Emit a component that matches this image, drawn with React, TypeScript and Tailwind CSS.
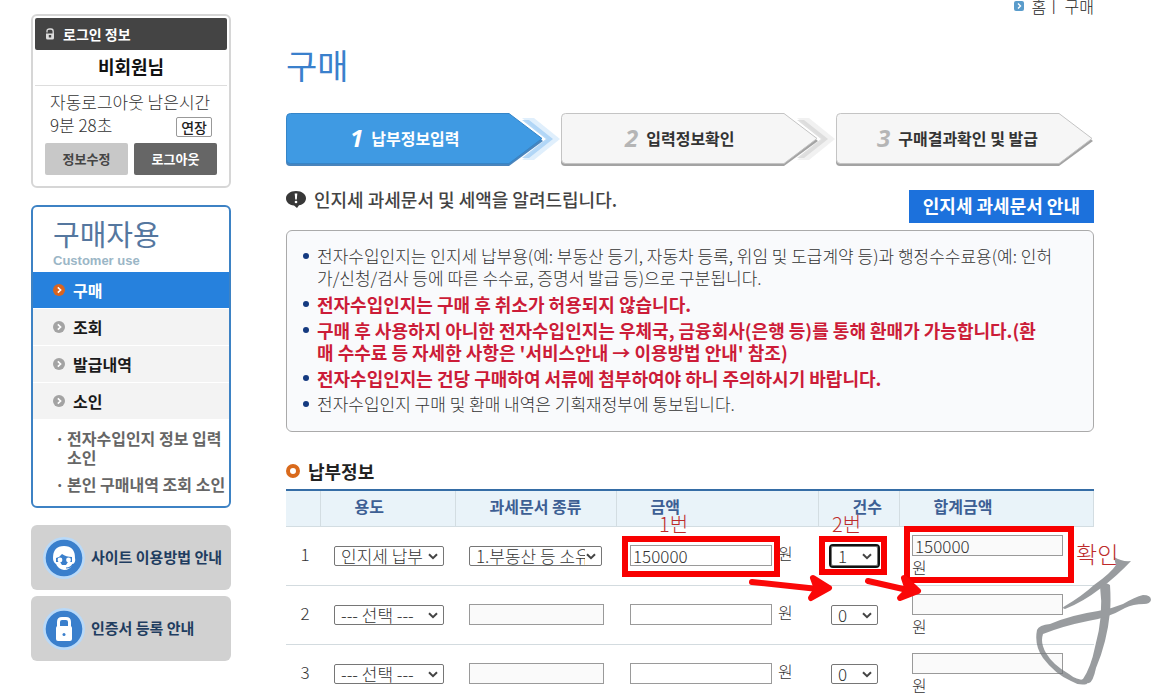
import type { ReactNode } from 'react'

const menu = ['구매', '조회', '발급내역', '소인']

const notices: { text: ReactNode; strong?: boolean }[] = [
  {
    text: (
      <>
        전자수입인지는 인지세 납부용(예: 부동산 등기, 자동차 등록, 위임 및 도급계약 등)과 행정수수료용(예: 인허
        <br />
        가/신청/검사 등에 따른 수수료, 증명서 발급 등)으로 구분됩니다.
      </>
    ),
  },
  { text: '전자수입인지는 구매 후 취소가 허용되지 않습니다.', strong: true },
  {
    text: (
      <>
        구매 후 사용하지 아니한 전자수입인지는 우체국, 금융회사(은행 등)를 통해 환매가 가능합니다.(환
        <br />매 수수료 등 자세한 사항은 '서비스안내 → 이용방법 안내' 참조)
      </>
    ),
    strong: true,
  },
  { text: '전자수입인지는 건당 구매하여 서류에 첨부하여야 하니 주의하시기 바랍니다.', strong: true },
  { text: '전자수입인지 구매 및 환매 내역은 기획재정부에 통보됩니다.' },
]

const rows = [
  { id: 1, use: '인지세 납부', doc: '1.부동산 등 소유권 이전', amount: '150000', count: '1', total: '150000' },
  { id: 2, use: '--- 선택 ---', doc: '', amount: '', count: '0', total: '' },
  { id: 3, use: '--- 선택 ---', doc: '', amount: '', count: '0', total: '' },
]

const inputClass = 'h-[21px] border border-[#9a9a9a] px-0.5 text-[17px] leading-4 text-[#333]'

function Bullet({ active }: { active?: boolean }) {
  return (
    <svg viewBox="0 0 12 12" className="h-3 w-3 shrink-0" aria-hidden="true">
      <circle cx="6" cy="6" r="6" fill={active ? '#d9641e' : '#a3a3a3'} />
      <path d="M4.8 3.4 7.6 6 4.8 8.6" fill="none" stroke="#fff" strokeWidth="1.6" />
    </svg>
  )
}

function LoginBox() {
  return (
    <section className="rounded-md border-2 border-[#d6d6d6] bg-white p-0.5 pb-[11px]">
      <h2 className="flex h-8 items-center gap-2 rounded-xs bg-[#444] px-2.5 text-sm font-bold text-white">
        <svg viewBox="0 0 10 12" className="h-3 w-2.5" aria-hidden="true">
          <path d="M2 4.500V3q0-2 2.500-2H6q2.200 0 2.200 2.500V7" fill="none" stroke="#ddd" strokeWidth="1.300" />
          <path d="M1 5.500h8V10q0 1.500-1.500 1.500h-5Q1 11.500 1 10z" fill="#ddd" />
          <path d="M3.800 7h2.400v2.500H3.800z" fill="#444" />
        </svg>
        로그인 정보
      </h2>
      <p className="h-9 border-b border-[#ddd] text-center text-lg leading-8 font-bold text-[#111]">비회원님</p>
      <div className="px-[15px] pt-[5px] text-[17px] leading-[22px] font-light text-[#333]">
        <p className="whitespace-nowrap">자동로그아웃 남은시간</p>
        <div className="flex items-center justify-between">
          <span>9분 28초</span>
          <button
            type="button"
            className="mt-1 h-5 rounded-xs border border-[#999] bg-white px-1 text-sm leading-4 font-medium text-[#222]"
          >
            연장
          </button>
        </div>
      </div>
      <div className="mt-1.5 flex gap-1.5 px-2.5">
        <button type="button" className="h-8 flex-1 rounded-xs bg-[#c8c8c8] text-[13px] font-bold text-[#444]">
          정보수정
        </button>
        <button type="button" className="h-8 flex-1 rounded-xs bg-[#666] text-[13px] font-bold text-white">
          로그아웃
        </button>
      </div>
    </section>
  )
}

function SideMenu() {
  return (
    <nav className="rounded-md border-2 border-[#3d82c4] bg-white">
      <div className="h-[65px] pt-2.5 pl-5">
        <h2 className="text-[29px] leading-8 text-[#55779f]">구매자용</h2>
        <p className="mt-1 font-['Liberation_Sans',sans-serif] text-[13px] leading-4 font-bold text-[#9bb6c6]">
          Customer use
        </p>
      </div>
      <ul className="flex flex-col gap-px">
        {menu.map((item, i) => (
          <li key={item}>
            <a
              href="#"
              className={`flex h-9 items-center gap-2 pl-5 text-base font-bold ${
                i === 0 ? 'bg-[#2681dd] text-white' : 'bg-[#f3f3f3] text-[#1a1a1a]'
              }`}
            >
              <Bullet active={i === 0} />
              {item}
            </a>
          </li>
        ))}
      </ul>
      <ul className="flex flex-col gap-2 pt-2.5 pb-3 pl-[22px] text-base leading-[19px] font-bold text-[#666]">
        <li className="flex gap-1 whitespace-nowrap">
          <span className="w-2 text-center">·</span>
          <a href="#">
            전자수입인지 정보 입력
            <br />
            소인
          </a>
        </li>
        <li className="flex gap-1 whitespace-nowrap">
          <span className="w-2 text-center">·</span>
          <a href="#">본인 구매내역 조회 소인</a>
        </li>
      </ul>
    </nav>
  )
}

function Banner({ label, children }: { label: string; children: ReactNode }) {
  return (
    <a
      href="#"
      className="flex h-[65px] items-center gap-1.5 rounded-md bg-[#d1d1d1] pl-3 text-[15px] font-bold whitespace-nowrap text-[#1f3d60]"
    >
      <svg viewBox="0 0 42 42" className="h-[42px] w-[42px] shrink-0" aria-hidden="true">
        <circle cx="21" cy="21" r="21" fill="#b9d9f8" />
        <circle cx="21" cy="21" r="18.300" fill="#3a7fcc" />
        {children}
      </svg>
      {label}
    </a>
  )
}

function Step({ no, label, state }: { no: number; label: string; state: 'active' | 'next' | 'last' }) {
  const active = state === 'active'
  const glow = active ? '#a5d0f5' : '#d8d8d8'
  const width = state === 'last' ? 258 : 275
  return (
    <li
      className={`relative flex h-14 items-center gap-2 pb-1 whitespace-nowrap ${
        state === 'last' ? 'pl-[41px]' : 'pl-16'
      }`}
    >
      <svg
        viewBox={`0 0 ${width} 56`}
        preserveAspectRatio="none"
        className="absolute inset-0 h-full w-full"
        aria-hidden="true"
      >
        {state !== 'last' && (
          <>
            <path d="M236 6h12l26 21-26 21h-12l26-21z" fill={glow} opacity=".35" />
            <path d="M236 8h7l24 19-24 19h-7l24-19z" fill={glow} opacity=".8" />
          </>
        )}
        <path
          d="M4 4h219l34 25-34 25H4q-4 0-4-4V8q0-4 4-4z"
          fill={active ? '#3577b5' : '#999'}
          opacity=".9"
        />
        <path
          d="M4.500 1.500h218.500l33 25-33 25H4.500q-4 0-4-4v-42q0-4 4-4z"
          fill={active ? '#3f9ae3' : '#f6f6f6'}
          stroke={active ? '#3585c8' : '#c4c4c4'}
        />
      </svg>
      <span
        className={`relative font-['Open_Sans',sans-serif] text-2xl font-bold italic ${
          active ? 'text-white' : 'text-[#b5b5b5]'
        }`}
      >
        {no}
      </span>
      <span className={`relative text-base font-bold ${active ? 'text-white' : 'text-[#333]'}`}>{label}</span>
    </li>
  )
}

/** Red guide marks and the signature laid over the payment table. */
function GuideMarks() {
  return (
    <svg
      viewBox="286 489 870 211"
      className="pointer-events-none absolute top-0 left-0 h-[211px] w-[870px] max-w-none"
      aria-hidden="true"
    >
      <g fill="#72777b" opacity=".72">
        <path d="M1114 557q8 5 17 4-14 15-30 27-18 14-36 21-4-1 0-3 17-10 29-21 17-12 22-20-1-3-2-8z" />
        <path d="M1100 586q5-5 10-1 1 16 0 27-3 30-14 56-3 14-7 15-7 2-12-1l6-3q8-12 12-32 9-32 5-61z" />
        <path d="M1151 600q0-5-8-5-8 2-20 9-12 5-25 7-27 4-48 13-11 1-13 6-3 15 6 28 12 16 28 23 8 5 16 3l-1-4q-10 0-17-6-16-9-23-21-6-10-3-19 20-8 45-13 20-3 37-13 8-4 19-4 6 0 7-4z" />
      </g>
      <g fill="none" stroke="#f80000" strokeWidth="6">
        <rect x="625" y="539" width="152" height="35" />
        <rect x="822" y="539" width="62" height="33" />
        <rect x="907" y="529" width="164" height="51" />
      </g>
      <g fill="#fa0808" stroke="#fa0808" strokeWidth="6" strokeLinecap="round" strokeLinejoin="round">
        <path d="m752 582 66 7" />
        <path d="m813 578 16 10-18 10 6-9z" />
        <path d="m868 581 44 10" />
        <path d="m904 578 14 13-18 7 8-8z" />
      </g>
      <g fill="#bd2b2b" fontSize="20" fontWeight="300">
        <text x="659" y="532">
          1번
        </text>
        <text x="832" y="532">
          2번
        </text>
        <text x="1076" y="563" fontSize="23">
          확인
        </text>
      </g>
    </svg>
  )
}

function Select({ label, value, className, focused }: { label: string; value: string; className: string; focused?: boolean }) {
  return (
    <div className={`relative h-5 ${className}`}>
      <select
        aria-label={label}
        className={`block h-5 w-full appearance-none overflow-hidden rounded-xs border border-[#767676] bg-white pr-4 pl-1.5 text-[17px] leading-[18px] text-[#333] ${
          focused ? 'outline-2 outline-[#111]' : ''
        }`}
      >
        <option>{value}</option>
      </select>
      <svg viewBox="0 0 10 7" className="pointer-events-none absolute top-[7px] right-1.5 h-[7px] w-2.5" aria-hidden="true">
        <path d="m1 1.200 4 4 4-4" fill="none" stroke="#444" strokeWidth="2" />
      </svg>
    </div>
  )
}

function PaymentTable() {
  return (
    <div className="relative">
      <table className="w-full table-fixed border-collapse border-t-2 border-[#356da6] text-[17px] font-light text-[#333]">
        <colgroup>
          <col className="w-[34px]" />
          <col className="w-[135px]" />
          <col className="w-[161px]" />
          <col className="w-[202px]" />
          <col className="w-[81px]" />
          <col />
        </colgroup>
        <thead className="bg-[#e9f3f9] text-left text-base text-[#3d5f94]">
          <tr className="h-9 border-b border-[#d3dde2] *:border-r *:border-[#d3dde2] *:pb-1">
            <th />
            <th className="pl-[34px]">용도</th>
            <th className="pl-[34px]">과세문서 종류</th>
            <th className="pl-[34px]">금액</th>
            <th className="pl-[34px]">건수</th>
            <th className="pl-[34px]">합계금액</th>
          </tr>
        </thead>
        <tbody>
          {rows.map((row) => (
            <tr key={row.id} className="h-[59px] border-b border-[#d3dbdf]">
              <td className="pb-1 pl-1 text-center">{row.id}</td>
              <td className="pl-3.5">
                <Select label={`용도 ${row.id}`} value={row.use} className="w-[110px]" />
              </td>
              <td className="pl-3.5">
                {row.doc ? (
                  <Select label={`과세문서 종류 ${row.id}`} value={row.doc} className="w-[133px]" />
                ) : (
                  <input
                    aria-label={`과세문서 종류 ${row.id}`}
                    disabled
                    className={`block w-[135px] bg-[#fafafa] ${inputClass}`}
                  />
                )}
              </td>
              <td className="pl-3.5">
                <div className="flex items-start gap-1.5">
                  <input
                    aria-label={`금액 ${row.id}`}
                    defaultValue={row.amount}
                    className={`w-[142px] bg-white ${inputClass}`}
                  />
                  <span className="text-base leading-4">원</span>
                </div>
              </td>
              <td className="pl-[13px]">
                <Select label={`건수 ${row.id}`} value={row.count} className="w-[47px]" focused={row.id === 1} />
              </td>
              <td className="pl-[13px]">
                <div className="flex flex-col gap-0.5">
                  <input
                    aria-label={`합계금액 ${row.id}`}
                    readOnly
                    defaultValue={row.total}
                    className={`w-[151px] bg-[#fafafa] ${inputClass}`}
                  />
                  <span className="text-base leading-[18px]">원</span>
                </div>
              </td>
            </tr>
          ))}
        </tbody>
      </table>
      <GuideMarks />
    </div>
  )
}

export default function App() {
  return (
    <div className="flex h-screen gap-[55px] overflow-hidden bg-white pr-20 pl-[31px] font-['Noto_Sans_CJK_KR',sans-serif]">
      <aside className="w-[200px] shrink-0 pt-3.5">
        <LoginBox />
        <div className="mt-[17px]">
          <SideMenu />
        </div>
        <div className="mt-[17px] flex flex-col gap-1.5">
          <Banner label="사이트 이용방법 안내">
            <path
              fill="#fff"
              d="M10 21q0-12 11-12 11 0 11 12 1 4-2 6-3 6-9 6-6-1-8-6-3-2-3-6z"
            />
            <path d="M13 21q4-1 6-4 4 3 10 3v5h-4l-2 3h-4l-2-3h-4z" fill="#3a7fcc" />
            <circle cx="17" cy="23" r="2.400" fill="#fff" />
            <circle cx="25.500" cy="23" r="2.400" fill="#fff" />
            <path d="M30 27q-2 4-7 4" fill="none" stroke="#3a7fcc" strokeWidth="1.200" />
          </Banner>
          <Banner label="인증서 등록 안내">
            <path d="M15.500 19v-5q0-3.500 3.500-3.500h4q3.500 0 3.500 3.500v5" fill="none" stroke="#fff" strokeWidth="3" />
            <rect x="13" y="18" width="16" height="15" rx="2" fill="#fff" />
            <circle cx="21" cy="26.500" r="1.500" fill="#3a7fcc" />
          </Banner>
        </div>
      </aside>

      <main className="min-w-0 flex-1">
        <div className="flex h-3 items-center justify-end gap-2 text-base leading-3 font-light text-[#222]">
          <svg viewBox="0 0 10 10" className="h-2.5 w-2.5" aria-hidden="true">
            <rect width="10" height="10" rx="2" fill="#5a9ccb" />
            <path d="m4 2.500 2.500 2.500L4 7.500" fill="none" stroke="#fff" strokeWidth="1.400" />
          </svg>
          <span>홈ㅣ 구매</span>
        </div>
        <h1 className="mt-8 text-[34px] leading-[42px] text-[#3a80cc]">구매</h1>

        <ol className="mt-[26px] grid grid-cols-[275fr_275fr_258fr]">
          <Step no={1} label="납부정보입력" state="active" />
          <Step no={2} label="입력정보확인" state="next" />
          <Step no={3} label="구매결과확인 및 발급" state="last" />
        </ol>

        <div className="mt-[22px] flex h-8 items-start justify-between">
          <p className="flex items-center gap-2 text-lg leading-[18px] font-medium text-[#444]">
            <svg viewBox="0 0 20 17" className="h-[17px] w-5" aria-hidden="true">
              <path d="M10 0c6 0 10 3.400 10 7.200 0 3.700-3 6.300-7 7L11 17l-3-2.500C3 14 0 11 0 7.200 0 3.400 4 0 10 0z" fill="#383838" />
              <path d="M8.700 2.500h2.600l-.5 6H9.200z" fill="#fff" />
              <circle cx="10" cy="11" r="1.300" fill="#fff" />
            </svg>
            인지세 과세문서 및 세액을 알려드립니다.
          </p>
          <button type="button" className="h-[33px] bg-[#1c71dc] px-3.5 pb-1 text-lg leading-7 font-bold text-white">
            인지세 과세문서 안내
          </button>
        </div>

        <ul className="mt-2 flex flex-col gap-1 rounded-md border border-[#aaa] bg-[#f9fafc] px-4 pt-3.5 pb-4 leading-[22px] whitespace-nowrap">
          {notices.map((n, i) => (
            <li
              key={i}
              className={`flex gap-2 ${
                n.strong ? 'text-lg leading-[22px] font-bold text-[#cc1c38]' : 'text-[17px] font-light text-[#333]'
              }`}
            >
              <span className="mt-2 h-1.5 w-1.5 shrink-0 rounded-full bg-[#153a80]" />
              <span>{n.text}</span>
            </li>
          ))}
        </ul>

        <h2 className="mt-7 mb-[7px] flex items-center gap-2 text-lg leading-[22px] font-bold text-[#222]">
          <svg viewBox="0 0 14 14" className="h-3.5 w-3.5" aria-hidden="true">
            <circle cx="7" cy="7" r="5" fill="#fff" stroke="#d96a1c" strokeWidth="4" />
          </svg>
          납부정보
        </h2>
        <PaymentTable />
      </main>
    </div>
  )
}
